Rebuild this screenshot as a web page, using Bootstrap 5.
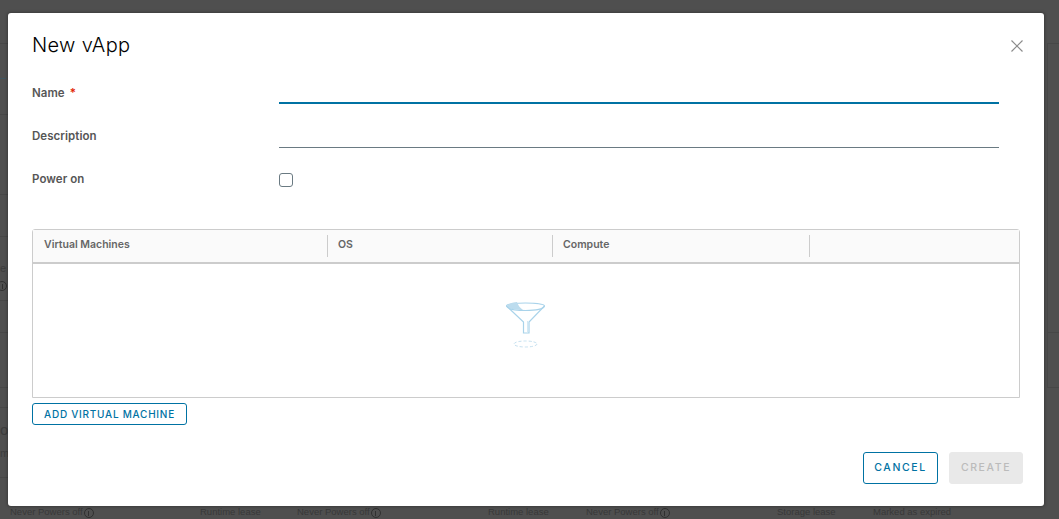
<!DOCTYPE html>
<html lang="en"><head><meta charset="utf-8"><title>New vApp</title>
<link href="https://cdn.jsdelivr.net/npm/bootstrap@5.3.0/dist/css/bootstrap.min.css" rel="stylesheet">
<style>
html,body{height:519px;overflow:hidden}
body{background:#4f4f4f;font-family:Inter,"Liberation Sans",sans-serif;position:relative}
.under{position:absolute;left:0;right:0;top:490px;height:29px;color:#383838;font-size:9.5px;font-family:"Liberation Sans",sans-serif}
.under span{position:absolute;top:15px;white-space:nowrap}
.infodot{display:inline-block;width:10px;height:10px;border:1px solid #303030;border-radius:50%;margin-left:1px;vertical-align:-3px;background:linear-gradient(#303030,#303030) center/1px 5px no-repeat}
.backtext{position:absolute;left:0;white-space:nowrap;color:#3d3d3d;font-family:"Liberation Sans",sans-serif;font-size:11px;line-height:14px}
.sheet{position:absolute;left:8px;top:13px;width:1036px;height:493px;background:#fff;border-radius:3px;box-shadow:0 0 3px 1px rgba(0,0,0,.25);padding:0 21px 0 24px;display:flex;flex-direction:column}
.sheet-title{font-size:20px;font-weight:300;color:#000;line-height:28px;margin:18px 0 0;letter-spacing:.35px}
.closer{position:absolute;left:1003px;top:27px;width:12px;height:12px;padding:0;border:0;background:none;display:flex}
.formwrap{margin-top:22px}
.formrow{height:43px;display:flex;align-items:flex-start;font-size:11.5px;font-weight:600;color:#565656;letter-spacing:.05px}
.formrow label{width:247px;flex:none;line-height:16px;margin-top:4px}
.req{color:#e12200;margin-left:2px}
.field{width:720px;height:31px;margin-top:-8px;border-bottom:1px solid #6a7a82}
.field.on{border-bottom:2px solid #0072a3}
.field.tall{height:32px}
.check{width:14px;height:14px;border:1px solid #6a7a82;border-radius:3px;margin-top:6px;appearance:none;display:block}
.gridbox{width:988px;height:169px;margin-top:19px;border:1px solid #ccc;border-radius:3px 3px 0 0;display:flex;flex-direction:column}
.gridhead{height:34px;flex:none;background:#fafafa;border-bottom:2px solid #ccc;display:flex;font-size:10.500px;font-weight:600;color:#666;line-height:29px}
.gridhead div{padding-left:11px;position:relative}
.gridhead div+div::before{content:"";position:absolute;left:0;top:5px;height:22px;width:1px;background:#ccc}
.colvm{width:294px}.colos{width:225px}.colcomp{width:257px}
.gridbody{flex:1;display:flex;align-items:flex-start;justify-content:center;padding-top:36px}
.outline-act,.off-act{font-family:Inter,"Liberation Sans",sans-serif;font-weight:500;text-transform:uppercase;border-radius:3px;padding:0}
.outline-act{border:1px solid #0072a3;color:#0072a3;background:#fff}
.addvm{width:155px;height:22px;font-size:10px;letter-spacing:.75px;margin-top:5px;line-height:20px}
.foot{margin-top:auto;padding-bottom:22px;gap:11px}
.cancel{width:75px;height:32px;font-size:10.500px;letter-spacing:1.6px}
.off-act{width:74px;height:32px;font-size:10.500px;letter-spacing:1.6px;background:#e9e9e9;border:1px solid #e9e9e9;color:#bbb;opacity:1}
.hl{position:absolute;height:1px;background:#474747}
.hl-l{left:0;width:8px}
.hl-r{left:1047px;right:0}
.vl{position:absolute;left:1047px;top:43px;height:344px;width:1px;background:#474747}
.bluebit{position:absolute;left:0;top:78px;width:6px;height:1px;background:#3f5560}
.dotpos{position:absolute;left:-3px;top:281px;margin:0}
</style></head>
<body>
<div class="under">
<span style="left:10px">Never Powers off<i class="infodot"></i></span>
<span style="left:200px">Runtime lease</span>
<span style="left:297px">Never Powers off<i class="infodot"></i></span>
<span style="left:488px">Runtime lease</span>
<span style="left:586px">Never Powers off<i class="infodot"></i></span>
<span style="left:777px">Storage lease</span>
<span style="left:873px">Marked as expired</span>
</div>
<div class="hl hl-l" style="top:43px"></div>
<div class="hl hl-l" style="top:114px"></div>
<div class="hl hl-l" style="top:194px"></div>
<div class="hl hl-l" style="top:236px"></div>
<div class="hl hl-l" style="top:300px"></div>
<div class="hl hl-l" style="top:332px"></div>
<div class="hl hl-l" style="top:387px"></div>
<div class="hl hl-l" style="top:407px"></div>
<div class="hl hl-l" style="top:477px"></div>
<div class="hl hl-r" style="top:43px"></div>
<div class="hl hl-r" style="top:332px"></div>
<div class="hl hl-r" style="top:387px"></div>
<div class="vl"></div>
<div class="bluebit"></div>
<i class="infodot dotpos"></i>
<div class="backtext" style="top:261px">e</div>
<div class="backtext" style="top:423px;font-size:15px">oc</div>
<div class="backtext" style="top:446px">m</div>
<div class="sheet" role="dialog">
<h1 class="sheet-title">New vApp</h1>
<button class="closer" aria-label="Close"><svg width="12" height="12" viewBox="0 0 12 12"><path d="M.5.5l11 11M11.500.5l-11 11" stroke="#8c8c8c" stroke-width="1.200" fill="none"/></svg></button>
<div class="formwrap">
<div class="formrow"><label>Name <span class="req">*</span></label><div class="field on"></div></div>
<div class="formrow"><label>Description</label><div class="field tall"></div></div>
<div class="formrow"><label>Power on</label><input class="check" type="checkbox" aria-label="Power on"></div>
</div>
<div class="gridbox">
<div class="gridhead"><div class="colvm">Virtual Machines</div><div class="colos">OS</div><div class="colcomp">Compute</div><div class="flex-grow-1"></div></div>
<div class="gridbody"><svg width="42" height="50" viewBox="0 0 42 50" aria-hidden="true">
<path d="M1.500 6C1.500 2 39.500 2 39.500 6L24 22V33H18.500V22Z" fill="#fff" stroke="#a9d3ea" stroke-width="1.200"/>
<path d="M2 6C3 3.500 9 2 12 2C13 5 15 8 18 10C11 10 4 9 2 6Z" fill="#bcdcee"/>
<path d="M1.500 6C4 12 37 12 39.500 6" fill="none" stroke="#a9d3ea" stroke-width="1.200"/>
<path d="M22.500 21V33" stroke="#d3e9f5"/>
<ellipse cx="20.500" cy="44" rx="11.500" ry="3" fill="none" stroke="#c6e1f0" stroke-dasharray="3 2"/>
</svg></div>
</div>
<div><button class="outline-act addvm">Add Virtual Machine</button></div>
<div class="foot d-flex justify-content-end">
<button class="outline-act cancel">Cancel</button>
<button class="off-act" disabled>Create</button>
</div>
</div>
<script src="https://cdn.jsdelivr.net/npm/bootstrap@5.3.0/dist/js/bootstrap.bundle.min.js"></script>
</body></html>
